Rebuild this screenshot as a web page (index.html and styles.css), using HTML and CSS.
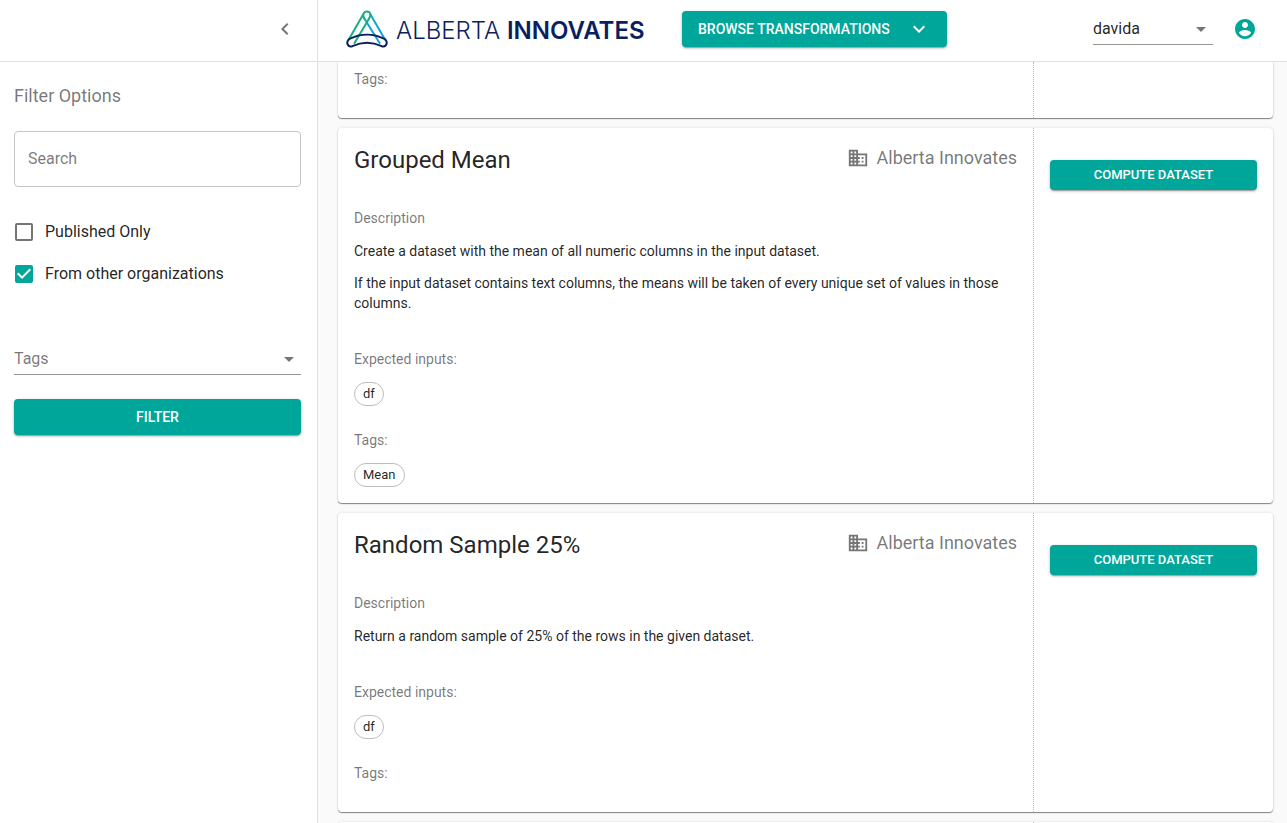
FILE: index.html
```html
<!DOCTYPE html>
<html lang="en">
<head>
<meta charset="utf-8">
<meta name="viewport" content="width=device-width, initial-scale=1">
<title>Alberta Innovates – Browse Transformations</title>
<link rel="stylesheet" href="styles.css">
</head>
<body>
<div class="app">
  <aside class="sidebar">
    <div class="sidebar-top">
      <button class="icon-button" type="button" aria-label="Collapse filters">
        <svg class="icon" viewBox="0 0 24 24"><path d="M15.41 7.41L14 6l-6 6 6 6 1.41-1.41L10.83 12z"/></svg>
      </button>
    </div>
    <form class="filters">
      <h2 class="filters-title">Filter Options</h2>
      <input class="search" type="text" placeholder="Search" aria-label="Search">
      <div class="checks">
        <label class="check"><input class="check-box" type="checkbox"><span>Published Only</span></label>
        <label class="check"><input class="check-box" type="checkbox" checked><span>From other organizations</span></label>
      </div>
      <div class="select-wrap tags-select">
        <select class="select select-muted" aria-label="Tags"><option>Tags</option></select>
        <svg class="icon select-arrow" viewBox="0 0 24 24"><path d="M7 10l5 5 5-5z"/></svg>
      </div>
      <button class="button button-wide" type="button">FILTER</button>
    </form>
  </aside>

  <div class="content">
    <header class="header">
      <a class="logo" href="#" aria-label="Alberta Innovates">
        <svg class="logo-mark" viewBox="0 0 42 38" fill="none" stroke-width="2" stroke-linecap="round">
          <path stroke="#12a4d9" d="M39 29.500L24.200 4M18.500 8.800L33.600 33"/>
          <path stroke="#14b07d" d="M2.800 29.500L17.400 4Q18.400 1.500 20.800 1.500Q24.600 1.500 24.400 5.200Q24.200 7 21.500 11.200L8.500 33M17.400 4Q16.800 6.500 18.500 8.800"/>
          <path stroke="#0b1f60" d="M3.500 28.800C14.500 23.300 27.500 23.300 38.500 28.800C42.600 31.800 40.500 37.600 35.700 36.200C25.500 31.300 16.500 31.300 6.300 36.200C1.500 37.600-.6 31.800 3.500 28.800Z"/>
        </svg>
        <span class="logo-text">ALBERTA <b>INNOVATES</b></span>
      </a>
      <button class="button browse" type="button">
        <span>BROWSE TRANSFORMATIONS</span>
        <svg class="icon" viewBox="0 0 24 24"><path d="M7.410 8.590L12 13.170l4.590-4.580L18 10l-6 6-6-6z"/></svg>
      </button>
      <div class="account">
        <div class="select-wrap">
          <select class="select" aria-label="User"><option>davida</option></select>
          <svg class="icon select-arrow" viewBox="0 0 24 24"><path d="M7 10l5 5 5-5z"/></svg>
        </div>
        <button class="icon-button account-button" type="button" aria-label="Account">
          <svg class="icon" viewBox="0 0 24 24"><path d="M12 2C6.480 2 2 6.480 2 12s4.480 10 10 10 10-4.480 10-10S17.520 2 12 2zm0 3c1.660 0 3 1.340 3 3s-1.340 3-3 3-3-1.340-3-3 1.340-3 3-3zm0 14.200c-2.500 0-4.710-1.280-6-3.220.03-1.990 4-3.080 6-3.080 1.990 0 5.970 1.090 6 3.080-1.290 1.940-3.500 3.220-6 3.220z"/></svg>
        </button>
      </div>
    </header>

    <main class="list">
      <article class="card card-partial">
        <div class="card-body">
          <h4 class="label">Tags:</h4>
          <div class="chips"></div>
        </div>
        <div class="card-actions"></div>
      </article>

      <article class="card">
        <div class="card-body">
          <div class="card-head">
            <h3 class="card-title">Grouped Mean</h3>
            <div class="org">
              <svg class="icon" viewBox="0 0 24 24"><path d="M12 7V3H2v18h20V7H12zM6 19H4v-2h2v2zm0-4H4v-2h2v2zm0-4H4V9h2v2zm0-4H4V5h2v2zm4 12H8v-2h2v2zm0-4H8v-2h2v2zm0-4H8V9h2v2zm0-4H8V5h2v2zm10 12h-8v-2h2v-2h-2v-2h2v-2h-2V9h8v10zm-2-8h-2v2h2v-2zm0 4h-2v2h2v-2z"/></svg>
              <span>Alberta Innovates</span>
            </div>
          </div>
          <h4 class="label">Description</h4>
          <div class="description">
            <p>Create a dataset with the mean of all numeric columns in the input dataset.</p>
            <p>If the input dataset contains text columns, the means will be taken of every unique set of values in those columns.</p>
          </div>
          <h4 class="label">Expected inputs:</h4>
          <div class="chips chips-inputs"><span class="chip">df</span></div>
          <h4 class="label">Tags:</h4>
          <div class="chips"><span class="chip">Mean</span></div>
        </div>
        <div class="card-actions"><button class="button button-small" type="button">COMPUTE DATASET</button></div>
      </article>

      <article class="card">
        <div class="card-body">
          <div class="card-head">
            <h3 class="card-title">Random Sample 25%</h3>
            <div class="org">
              <svg class="icon" viewBox="0 0 24 24"><path d="M12 7V3H2v18h20V7H12zM6 19H4v-2h2v2zm0-4H4v-2h2v2zm0-4H4V9h2v2zm0-4H4V5h2v2zm4 12H8v-2h2v2zm0-4H8v-2h2v2zm0-4H8V9h2v2zm0-4H8V5h2v2zm10 12h-8v-2h2v-2h-2v-2h2v-2h-2V9h8v10zm-2-8h-2v2h2v-2zm0 4h-2v2h2v-2z"/></svg>
              <span>Alberta Innovates</span>
            </div>
          </div>
          <h4 class="label">Description</h4>
          <div class="description">
            <p>Return a random sample of 25% of the rows in the given dataset.</p>
          </div>
          <h4 class="label">Expected inputs:</h4>
          <div class="chips chips-inputs"><span class="chip">df</span></div>
          <h4 class="label">Tags:</h4>
          <div class="chips"></div>
        </div>
        <div class="card-actions"><button class="button button-small" type="button">COMPUTE DATASET</button></div>
      </article>

      <article class="card">
        <div class="card-body"></div>
        <div class="card-actions"></div>
      </article>
    </main>
  </div>
</div>
</body>
</html>
```

FILE: styles.css
```css
* { box-sizing: border-box; }

body {
  margin: 0;
  background: #fafafa;
  color: rgba(0, 0, 0, 0.87);
  font-family: Roboto, "Liberation Sans", sans-serif;
  font-size: 14px;
  line-height: 20px;
}

h2, h3, h4, p { margin: 0; font-weight: 400; }

button, input, select { font: inherit; color: inherit; }

.app { display: flex; height: 100vh; overflow: hidden; }

.icon { display: block; width: 24px; height: 24px; fill: currentColor; flex: none; }

.icon-button {
  padding: 0;
  border: 0;
  background: none;
  color: rgba(0, 0, 0, 0.54);
  cursor: pointer;
}

/* Sidebar */
.sidebar {
  flex: none;
  width: 318px;
  background: #fff;
  border-right: 1px solid #e0e0e0;
}

.sidebar-top {
  display: flex;
  align-items: center;
  justify-content: flex-end;
  height: 62px;
  padding: 0 20px 4px;
  border-bottom: 1px solid #e0e0e0;
}

.filters { display: flex; flex-direction: column; padding: 20px 16px 0 14px; }

.filters-title {
  margin-bottom: 21px;
  color: rgba(0, 0, 0, 0.54);
  font-size: 18px;
  line-height: 28px;
}

.search {
  width: 100%;
  height: 56px;
  padding: 0 13px 2px;
  border: 1px solid #c4c4c4;
  border-radius: 4px;
  background: #fff;
  font-size: 16px;
}

.search::placeholder { color: rgba(0, 0, 0, 0.54); opacity: 1; }

.checks { margin-top: 24px; }

.check {
  display: flex;
  align-items: center;
  gap: 12px;
  height: 42px;
  font-size: 16px;
}

.check-box {
  appearance: none;
  width: 18px;
  height: 18px;
  margin: 0 0 0 1px;
  border: 2px solid #757575;
  border-radius: 2px;
}

.check-box:checked { border: 0; background: #00a699; }

.check-box:checked::before {
  content: "";
  display: block;
  height: 18px;
  background: #fff;
  clip-path: polygon(39% 78%, 11% 50%, 19% 42%, 39% 62%, 81% 20%, 89% 28%);
}

.select-wrap { display: grid; width: 120px; }

.select {
  grid-area: 1 / 1;
  appearance: none;
  width: 100%;
  height: 32px;
  padding: 1px 24px 0 0;
  border: 0;
  border-bottom: 1px solid #949494;
  border-radius: 0;
  background: none;
  font-size: 16px;
}

.select-muted { color: rgba(0, 0, 0, 0.54); }

.select-arrow {
  grid-area: 1 / 1;
  align-self: center;
  justify-self: end;
  color: rgba(0, 0, 0, 0.54);
  pointer-events: none;
}

.tags-select { width: 100%; margin: 48px 0 24px; }

/* Buttons */
.button {
  display: flex;
  align-items: center;
  justify-content: center;
  height: 36px;
  padding: 0 16px;
  border: 0;
  border-radius: 4px;
  background: #00a699;
  box-shadow: 0 1px 3px rgba(0, 0, 0, 0.3), 0 2px 1px -1px rgba(0, 0, 0, 0.2);
  color: #fff;
  font-size: 14px;
  font-weight: 500;
  white-space: nowrap;
  cursor: pointer;
}

.button-wide { width: 100%; }

.button-small { width: 100%; height: 30px; font-size: 13px; }

/* Header */
.content { display: flex; flex: 1; flex-direction: column; min-width: 0; }

.header {
  display: flex;
  flex: none;
  align-items: center;
  height: 62px;
  padding: 0 30px 4px 28px;
  background: #fff;
  border-bottom: 1px solid #e0e0e0;
}

.logo {
  display: flex;
  align-items: center;
  gap: 8px;
  width: 313px;
  margin-right: 23px;
  color: #0b1f60;
  text-decoration: none;
}

.logo-mark { width: 42px; height: 38px; flex: none; }

.logo-text {
  padding-top: 5px;
  font-family: Inter, "Open Sans", sans-serif;
  font-size: 24px;
  font-weight: 300;
  line-height: 32px;
  white-space: nowrap;
}

.logo-text b { font-weight: 600; }

.browse { width: 265px; justify-content: space-between; }

.account { display: flex; align-items: center; gap: 20px; margin-left: auto; }

.account-button { color: #00a699; }

/* Cards */
.list {
  display: flex;
  flex: 1;
  flex-direction: column;
  gap: 10px;
  min-height: 0;
  padding: 0 14px 0 20px;
  overflow: hidden;
}

.card {
  display: flex;
  flex: none;
  border-radius: 4px;
  background: #fff;
  box-shadow: 0 1px 1px rgba(0, 0, 0, 0.45), 0 0 3px rgba(0, 0, 0, 0.12);
}

.card-partial { border-radius: 0 0 4px 4px; }

.card-body { flex: 1; min-width: 0; padding: 16px; }

.card-partial .card-body { padding-top: 7px; }

.card-actions {
  flex: none;
  width: 240px;
  padding: 32px 16px 0;
  border-left: 1px dotted #bdbdbd;
}

.card-head {
  display: flex;
  align-items: flex-start;
  justify-content: space-between;
  margin-bottom: 32px;
}

.card-title { font-size: 24px; line-height: 32px; }

.org {
  display: flex;
  align-items: center;
  gap: 8px;
  color: rgba(0, 0, 0, 0.54);
  font-size: 18px;
  line-height: 28px;
}

.org .icon { height: 22px; width: 22px; }

.label {
  margin-bottom: 13px;
  color: rgba(0, 0, 0, 0.54);
  font-size: 14px;
  line-height: 20px;
}

.description { display: grid; gap: 12px; margin-bottom: 36px; }

.chips { display: flex; gap: 8px; }

.chips-inputs { margin-bottom: 24px; }

.chip {
  height: 24px;
  padding: 0 8px;
  border: 1px solid #bdbdbd;
  border-radius: 12px;
  font-size: 13px;
  line-height: 22px;
}
```
